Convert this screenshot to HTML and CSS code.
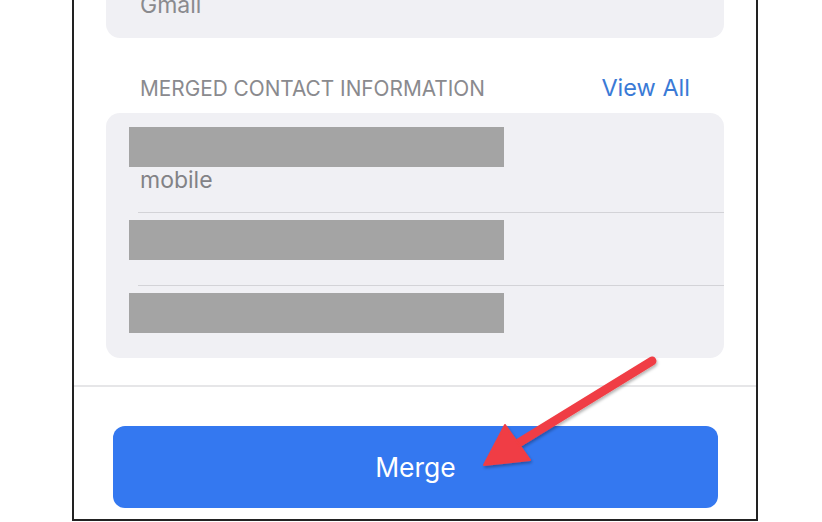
FILE: index.html
```html
<!DOCTYPE html>
<html lang="en">
<head>
    <meta charset="UTF-8">
    <meta name="viewport" content="width=device-width, initial-scale=1.0">
    <title>Merge Contacts</title>
    <link rel="stylesheet" href="styles.css">
</head>
<body>
    <div class="sheet">
        <div class="card source-card">
            <div class="source-label">Gmail</div>
        </div>

        <div class="section-header">
            <span class="section-title">MERGED CONTACT INFORMATION</span>
            <a class="view-all" href="#">View All</a>
        </div>

        <div class="card merged-card">
            <div class="info-row first">
                <div class="redacted"></div>
                <div class="info-label">mobile</div>
            </div>
            <div class="info-row">
                <div class="redacted"></div>
            </div>
            <div class="info-row">
                <div class="redacted"></div>
            </div>
        </div>

        <div class="footer">
            <button class="merge-btn" type="button">Merge</button>
        </div>
    </div>

    <!-- annotation arrow drawn over the screenshot -->
    <svg class="arrow" width="822" height="522" viewBox="0 0 822 522">
        <defs>
            <filter id="shadow" x="-20%" y="-20%" width="140%" height="140%">
                <feDropShadow dx="1" dy="2" stdDeviation="1.5" flood-color="#000" flood-opacity="0.3"/>
            </filter>
        </defs>
        <g filter="url(#shadow)" fill="#f03e44" stroke="#f03e44">
            <line x1="652" y1="361" x2="512" y2="447" stroke-width="9" stroke-linecap="round"/>
            <polygon points="484,465 505,425 530,460" stroke-width="2" stroke-linejoin="round"/>
        </g>
    </svg>
</body>
</html>
```

FILE: styles.css
```css
body {
    margin: 0;
    background-color: #fff;
    font-family: Inter, "Liberation Sans", Arial, sans-serif;
    overflow: hidden;
}
.sheet {
    width: 682px;
    margin: -40px 0 0 72px;
    border-left: 2px solid #222;
    border-right: 2px solid #222;
    border-bottom: 2px solid #222;
    display: flex;
    flex-direction: column;
}
.card {
    margin: 0 32px;
    background-color: #f0f0f4;
    border-radius: 14px;
}
.source-card {
    height: 78px;
    padding: 32px 34px 0;
    box-sizing: border-box;
}
.source-label {
    font-size: 23px;
    line-height: 26px;
    color: #8a8a8e;
}
.section-header {
    display: flex;
    justify-content: space-between;
    align-items: baseline;
    margin: 36px 32px 11px;
    padding: 0 34px;
}
.section-title {
    font-size: 20.8px;
    line-height: 24px;
    color: #8a8a8e;
}
.view-all {
    font-size: 23.5px;
    line-height: 28px;
    color: #3a7ad6;
    text-decoration: none;
}
.merged-card {
    height: 245px;
    overflow: hidden;
}
.info-row {
    margin-left: 32px;
    padding: 7px 0 25px;
    border-top: 1px solid #d3d3d7;
}
.info-row.first {
    border-top: none;
    padding: 14px 0 19px;
}
.redacted {
    width: 375px;
    height: 40px;
    margin-left: -9px;
    background-color: #a4a4a4;
}
.info-label {
    padding-left: 2px;
    font-size: 23px;
    line-height: 26px;
    color: #828286;
}
.footer {
    margin-top: 27px;
    border-top: 2px solid #e6e6e8;
    padding: 39px 38px 11px 39px;
}
.merge-btn {
    display: block;
    width: 100%;
    height: 82px;
    border: none;
    border-radius: 12px;
    background-color: #3478f0;
    color: #fff;
    font-family: inherit;
    font-size: 26.5px;
    cursor: pointer;
}
.arrow {
    position: absolute;
    left: 0;
    top: 0;
    pointer-events: none;
}
```
